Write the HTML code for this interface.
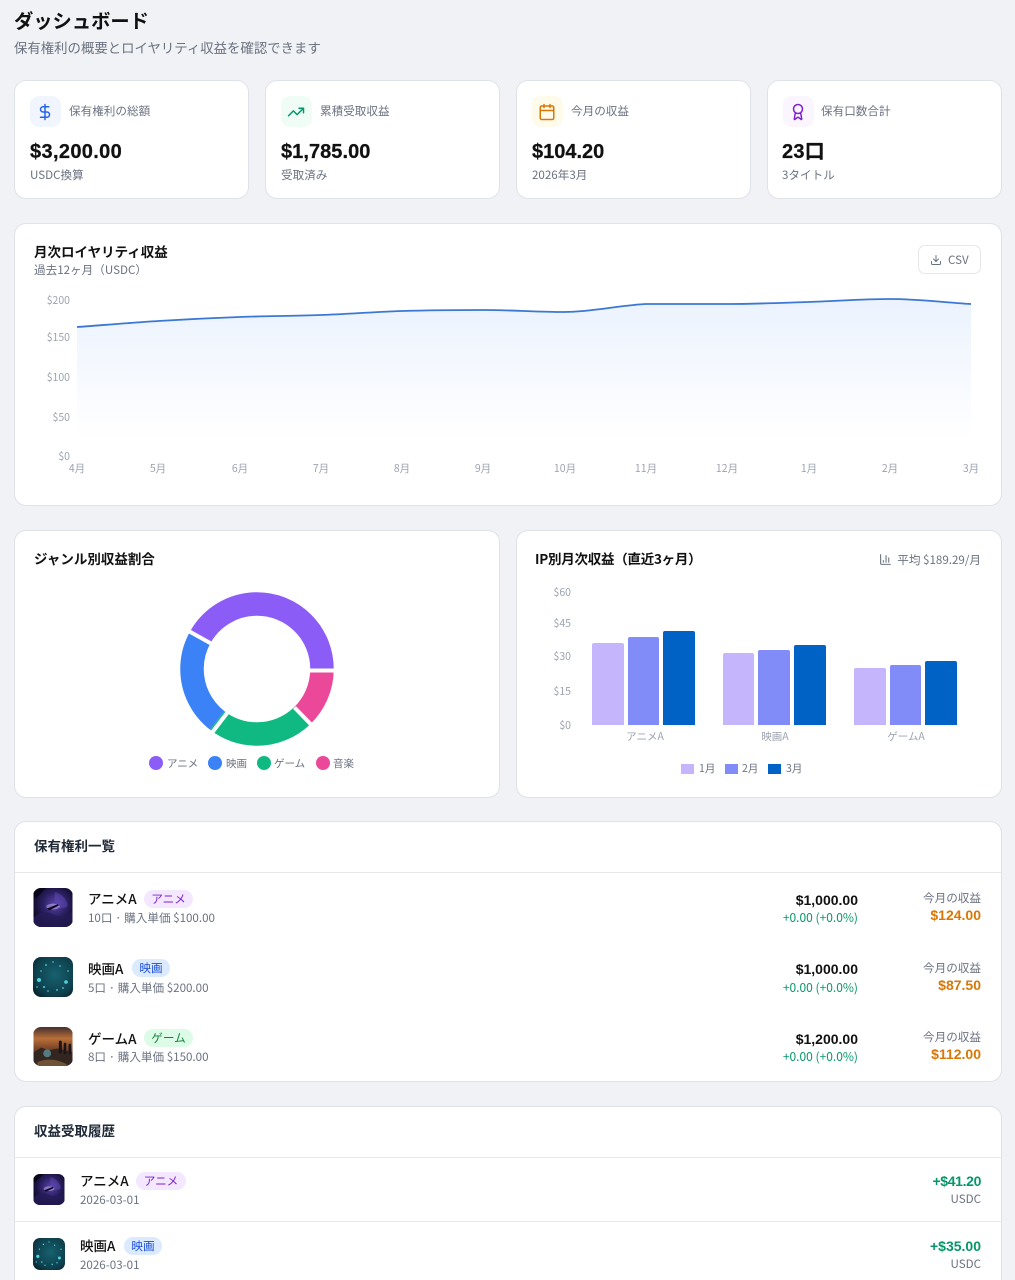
<!DOCTYPE html>
<html lang="ja"><head><meta charset="utf-8"><title>ダッシュボード</title>
<style>
html,body{margin:0;padding:0;background:#f0f2f5;height:1280px;overflow:hidden}
body{position:relative;width:1015px;font-family:"Noto Sans CJK JP","Liberation Sans",sans-serif;color:#111}
.c{position:absolute;background:#fff;border:1px solid #dfe2e8;border-radius:12px;box-sizing:border-box}
.t{position:absolute;white-space:nowrap;line-height:1}
.b{font-weight:700}
.n{font-family:"Liberation Sans","Noto Sans CJK JP",sans-serif;font-weight:700;letter-spacing:.2px}
.g{color:#6b7280}
.a{color:#9ca3af;font-size:10.5px}
.ib{position:absolute;width:31px;height:31px;border-radius:9px;top:96px}
.ib svg{position:absolute;left:6px;top:7px}
svg.i{fill:none;stroke-width:2;stroke-linecap:round;stroke-linejoin:round}
.p{position:absolute;height:18px;line-height:18px;border-radius:9px;font-size:11.6px;text-align:center}
.ani{background:#f3e8ff;color:#7e22ce}.mov{background:#dbeafe;color:#1d4ed8}.gam{background:#dcfce7;color:#15803d}
.d{position:absolute;height:1px;background:#e5e7eb}
.th{position:absolute;overflow:hidden}
.th svg{display:block;width:100%;height:100%}
.dot{position:absolute;width:14px;height:14px;border-radius:50%;top:756px}
.sq{position:absolute;width:13px;height:10px;top:764px}
</style></head><body>
<svg width="0" height="0" style="position:absolute">
<defs>
<radialGradient id="ga" cx=".55" cy=".42" r=".62"><stop offset="0" stop-color="#5b44ad"/><stop offset=".5" stop-color="#2c2063"/><stop offset="1" stop-color="#0a0820"/></radialGradient>
<radialGradient id="gm" cx=".55" cy=".45" r=".72"><stop offset="0" stop-color="#17616f"/><stop offset=".7" stop-color="#0e3f4c"/><stop offset="1" stop-color="#061d27"/></radialGradient>
<linearGradient id="gg" x1="0" y1="0" x2="0" y2="1"><stop offset="0" stop-color="#46302e"/><stop offset=".3" stop-color="#b96f38"/><stop offset=".55" stop-color="#7a4529"/><stop offset="1" stop-color="#1b1619"/></linearGradient>
<linearGradient id="lf" x1="0" y1="0" x2="0" y2="1"><stop offset="0" stop-color="#3b82f6" stop-opacity=".1"/><stop offset="1" stop-color="#3b82f6" stop-opacity="0"/></linearGradient>
<symbol id="ta" viewBox="0 0 40 40"><rect width="40" height="40" fill="url(#ga)"/><path d="M0 30Q10 22 20 27T40 24V40H0Z" fill="#261b58" opacity=".8"/><path d="M22 4q8 2 12 10t-8 6q-6-6-4-16Z" fill="#6b55c8" opacity=".4"/><ellipse cx="20" cy="19" rx="7" ry="3" fill="#c7b8f0" opacity=".5"/><path d="M14 21l11-4.500 1 1.500-10 5Z" fill="#0b0820"/><path d="M5 0h8L3 10H0V4Z" fill="#050414" opacity=".8"/></symbol>
<symbol id="tm" viewBox="0 0 40 40"><rect width="40" height="40" fill="url(#gm)"/><g fill="#4fd6e6"><circle cx="6" cy="23" r="2"/><circle cx="33" cy="25" r="1.800"/><circle cx="13" cy="8" r=".9"/><circle cx="20" cy="5" r=".8"/><circle cx="27" cy="9" r=".8"/><circle cx="8" cy="14" r=".8"/><circle cx="35" cy="14" r=".8"/><circle cx="11" cy="30" r="1"/><circle cx="15" cy="34" r=".8"/><circle cx="24" cy="33" r=".9"/><circle cx="30" cy="31" r=".9"/><circle cx="4" cy="30" r=".8"/></g></symbol>
<symbol id="tg" viewBox="0 0 40 40"><rect width="40" height="40" fill="url(#gg)"/><path d="M0 26l8-5 7 3 10-2 15 4V40H0Z" fill="#33251f"/><g fill="#1a1416"><rect x="26" y="14" width="3" height="13" rx="1.400"/><rect x="31" y="16" width="2.600" height="12" rx="1.300"/><rect x="36" y="17" width="2.400" height="11" rx="1.200"/></g><circle cx="14" cy="27" r="4" fill="#5d8f98" opacity=".8"/><path d="M4 36q14-6 30 2v2H4Z" fill="#a8804e" opacity=".5"/></symbol>
</defs>
</svg>

<div class="t b" style="left:14px;top:11px;font-size:19.3px">ダッシュボード</div>
<div class="t g" style="left:14px;top:41px;font-size:13.4px">保有権利の概要とロイヤリティ収益を確認できます</div>

<div class="c" style="left:14px;top:80px;width:235px;height:119px"></div>
<div class="c" style="left:265px;top:80px;width:235px;height:119px"></div>
<div class="c" style="left:516px;top:80px;width:235px;height:119px"></div>
<div class="c" style="left:767px;top:80px;width:235px;height:119px"></div>

<div class="ib" style="left:30px;background:#f1f6fe"><svg class="i" width="18" height="18" viewBox="0 0 24 24" stroke="#2563eb"><path d="M12 2v20"/><path d="M17 5H9.500a3.500 3.500 0 0 0 0 7h5a3.500 3.500 0 0 1 0 7H6"/></svg></div>
<div class="ib" style="left:281px;background:#f0fdf6"><svg class="i" width="18" height="18" viewBox="0 0 24 24" stroke="#059669"><path d="M22 7 13.500 15.500 8.500 10.500 2 17"/><path d="M16 7h6v6"/></svg></div>
<div class="ib" style="left:532px;background:#fffbeb"><svg class="i" width="18" height="18" viewBox="0 0 24 24" stroke="#d97706"><path d="M8 2v4M16 2v4"/><rect x="3" y="4" width="18" height="18" rx="2"/><path d="M3 10h18"/></svg></div>
<div class="ib" style="left:783px;background:#fbf5ff"><svg class="i" width="18" height="18" viewBox="0 0 24 24" stroke="#7e22ce"><path d="m15.477 12.890 1.515 8.526a.5.5 0 0 1-.81.470l-3.580-2.687a1 1 0 0 0-1.197 0l-3.586 2.686a.5.5 0 0 1-.81-.469l1.514-8.526"/><circle cx="12" cy="8" r="6"/></svg></div>

<div class="t g" style="left:69px;top:106px;font-size:11.6px">保有権利の総額</div>
<div class="t g" style="left:320px;top:106px;font-size:11.6px">累積受取収益</div>
<div class="t g" style="left:571px;top:106px;font-size:11.6px">今月の収益</div>
<div class="t g" style="left:821px;top:106px;font-size:11.6px">保有口数合計</div>

<div class="t n" style="left:30px;top:142px;font-size:20px;letter-spacing:.35px;-webkit-text-stroke:.25px #111">$3,200.00</div>
<div class="t n" style="left:281px;top:142px;font-size:20px;letter-spacing:.05px;-webkit-text-stroke:.25px #111">$1,785.00</div>
<div class="t n" style="left:532px;top:142px;font-size:20px;letter-spacing:0;-webkit-text-stroke:.25px #111">$104.20</div>
<div class="t n" style="left:782px;top:142px;font-size:20px;-webkit-text-stroke:.25px #111">23口</div>

<div class="t g" style="left:30px;top:170px;font-size:11.6px">USDC換算</div>
<div class="t g" style="left:281px;top:170px;font-size:11.6px">受取済み</div>
<div class="t g" style="left:532px;top:170px;font-size:11.6px">2026年3月</div>
<div class="t g" style="left:782px;top:170px;font-size:11.6px">3タイトル</div>

<div class="c" style="left:14px;top:223px;width:988px;height:283px"></div>
<div class="t b" style="left:34px;top:245px;font-size:13.5px">月次ロイヤリティ収益</div>
<div class="t g" style="left:34px;top:265px;font-size:11.6px">過去12ヶ月（USDC）</div>
<div style="position:absolute;left:918px;top:245px;width:63px;height:29px;border:1px solid #e5e7eb;border-radius:7px;box-sizing:border-box"></div>
<svg class="i" style="position:absolute;left:930px;top:254px" width="12" height="12" viewBox="0 0 24 24" stroke="#6b7280"><path d="M21 15v4a2 2 0 0 1-2 2H5a2 2 0 0 1-2-2v-4"/><path d="M7 10l5 5 5-5"/><path d="M12 15V3"/></svg>
<div class="t g" style="left:948px;top:255px;font-size:11.6px">CSV</div>

<svg style="position:absolute;left:0;top:0" width="1015" height="520">
<path d="M77 327C104.100 325 131.200 322.670 158.300 321C185.400 319.330 212.400 318 239.500 317C266.600 316 293.700 316 320.800 315C347.900 314 374.900 311.830 402 311C429.100 310.170 456.300 310 483.400 310C510.500 310 537.500 312 564.600 312C591.700 312 618.800 305.330 645.900 304C673 304 700.100 304 727.200 304C754.300 304 781.300 302.830 808.400 302C835.500 301.170 862.600 299 889.700 299C916.800 299 943.900 302.330 971 304V440H77Z" fill="url(#lf)"/>
<path d="M77 327C104.100 325 131.200 322.670 158.300 321C185.400 319.330 212.400 318 239.500 317C266.600 316 293.700 316 320.800 315C347.900 314 374.900 311.830 402 311C429.100 310.170 456.300 310 483.400 310C510.500 310 537.500 312 564.600 312C591.700 312 618.800 305.330 645.900 304C673 304 700.100 304 727.200 304C754.300 304 781.300 302.830 808.400 302C835.500 301.170 862.600 299 889.700 299C916.800 299 943.900 302.330 971 304" fill="none" stroke="#3b78d4" stroke-width="1.800"/>
</svg>
<div class="t a" style="right:945px;top:296px">$200</div>
<div class="t a" style="right:945px;top:333px">$150</div>
<div class="t a" style="right:945px;top:373px">$100</div>
<div class="t a" style="right:945px;top:413px">$50</div>
<div class="t a" style="right:945px;top:452px">$0</div>
<div class="t a" style="left:47px;width:60px;text-align:center;top:464px">4月</div>
<div class="t a" style="left:128px;width:60px;text-align:center;top:464px">5月</div>
<div class="t a" style="left:210px;width:60px;text-align:center;top:464px">6月</div>
<div class="t a" style="left:291px;width:60px;text-align:center;top:464px">7月</div>
<div class="t a" style="left:372px;width:60px;text-align:center;top:464px">8月</div>
<div class="t a" style="left:453px;width:60px;text-align:center;top:464px">9月</div>
<div class="t a" style="left:535px;width:60px;text-align:center;top:464px">10月</div>
<div class="t a" style="left:616px;width:60px;text-align:center;top:464px">11月</div>
<div class="t a" style="left:697px;width:60px;text-align:center;top:464px">12月</div>
<div class="t a" style="left:779px;width:60px;text-align:center;top:464px">1月</div>
<div class="t a" style="left:860px;width:60px;text-align:center;top:464px">2月</div>
<div class="t a" style="left:941px;width:60px;text-align:center;top:464px">3月</div>

<div class="c" style="left:14px;top:530px;width:486px;height:268px"></div>
<div class="t b" style="left:34px;top:552px;font-size:13.5px">ジャンル別収益割合</div>
<svg style="position:absolute;left:169.500px;top:582px" width="174" height="174" viewBox="-87 -87 174 174">
<g transform="scale(1 -1)" fill="none" stroke-width="23.500">
<circle r="65" stroke="#8b5cf6" pathLength="360" stroke-dasharray="151 209" stroke-dashoffset="0"/>
<circle r="65" stroke="#3b82f6" pathLength="360" stroke-dasharray="81.500 278.500" stroke-dashoffset="-151"/>
<circle r="65" stroke="#10b981" pathLength="360" stroke-dasharray="82 278" stroke-dashoffset="-232.500"/>
<circle r="65" stroke="#ec4899" pathLength="360" stroke-dasharray="45.500 314.500" stroke-dashoffset="-314.500"/>
</g>
<g stroke="#fff" stroke-width="4">
<path d="M50 1.500H80"/>
<path d="M-44.600 -24.700L-72 -40"/>
<path d="M-29.500 43.500L-46 65"/>
<path d="M37.500 38.500L56 57.500"/>
</g>
</svg>
<div class="dot" style="left:149px;background:#8b5cf6"></div><div class="t g" style="left:167px;top:759px;font-size:10.5px">アニメ</div>
<div class="dot" style="left:208px;background:#3b82f6"></div><div class="t g" style="left:226px;top:759px;font-size:10.5px">映画</div>
<div class="dot" style="left:257px;background:#10b981"></div><div class="t g" style="left:274px;top:759px;font-size:10.5px">ゲーム</div>
<div class="dot" style="left:316px;background:#ec4899"></div><div class="t g" style="left:333px;top:759px;font-size:10.5px">音楽</div>

<div class="c" style="left:516px;top:530px;width:486px;height:268px"></div>
<div class="t b" style="left:535px;top:552px;font-size:13.5px;letter-spacing:-.25px">IP別月次収益（直近3ヶ月）</div>
<svg class="i" style="position:absolute;left:879px;top:553px" width="13" height="13" viewBox="0 0 24 24" stroke="#6b7280"><path d="M3 3v16a2 2 0 0 0 2 2h16"/><path d="M18 17V9M13 17V5M8 17v-3"/></svg>
<div class="t g" style="right:34px;top:555px;font-size:11.6px">平均 $189.29/月</div>
<div class="t a" style="right:444px;top:588px">$60</div>
<div class="t a" style="right:444px;top:619px">$45</div>
<div class="t a" style="right:444px;top:652px">$30</div>
<div class="t a" style="right:444px;top:687px">$15</div>
<div class="t a" style="right:444px;top:721px">$0</div>
<svg style="position:absolute;left:0;top:600px" width="1015" height="130" viewBox="0 600 1015 130">
<path d="M592 725V645a2 2 0 0 1 2-2H622a2 2 0 0 1 2 2V725Z" fill="#c4b5fd"/>
<path d="M628 725V639a2 2 0 0 1 2-2H657a2 2 0 0 1 2 2V725Z" fill="#818cf8"/>
<path d="M663 725V633a2 2 0 0 1 2-2H693a2 2 0 0 1 2 2V725Z" fill="#0062c4"/>
<path d="M723 725V655a2 2 0 0 1 2-2H752a2 2 0 0 1 2 2V725Z" fill="#c4b5fd"/>
<path d="M758 725V652a2 2 0 0 1 2-2H788a2 2 0 0 1 2 2V725Z" fill="#818cf8"/>
<path d="M794 725V647a2 2 0 0 1 2-2H824a2 2 0 0 1 2 2V725Z" fill="#0062c4"/>
<path d="M854 725V670a2 2 0 0 1 2-2H884a2 2 0 0 1 2 2V725Z" fill="#c4b5fd"/>
<path d="M890 725V667a2 2 0 0 1 2-2H919a2 2 0 0 1 2 2V725Z" fill="#818cf8"/>
<path d="M925 725V663a2 2 0 0 1 2-2H955a2 2 0 0 1 2 2V725Z" fill="#0062c4"/>
</svg>
<div class="t a" style="left:595px;width:100px;text-align:center;top:732px">アニメA</div>
<div class="t a" style="left:725px;width:100px;text-align:center;top:732px">映画A</div>
<div class="t a" style="left:856px;width:100px;text-align:center;top:732px">ゲームA</div>
<div class="sq" style="left:681px;background:#c4b5fd"></div><div class="t g" style="left:699px;top:764px;font-size:10.5px">1月</div>
<div class="sq" style="left:725px;background:#818cf8"></div><div class="t g" style="left:742px;top:764px;font-size:10.5px">2月</div>
<div class="sq" style="left:768px;background:#0062c4"></div><div class="t g" style="left:786px;top:764px;font-size:10.5px">3月</div>

<div class="c" style="left:14px;top:821px;width:988px;height:261px"></div>
<div class="t b" style="left:34px;top:839px;font-size:13.5px;color:#1f2937">保有権利一覧</div>
<div class="d" style="left:15px;top:872px;width:986px"></div>

<div class="th" style="left:33px;top:888px;width:40px;height:39px;border-radius:8px"><svg><use href="#ta"/></svg></div>
<div class="t" style="left:88px;top:892px;font-size:13.5px;font-weight:500">アニメA</div>
<div class="p ani" style="left:144px;top:890px;width:49px">アニメ</div>
<div class="t g" style="left:88px;top:913px;font-size:11.6px">10口 · 購入単価 $100.00</div>
<div class="t n" style="right:157px;top:893px;font-size:14px;letter-spacing:0">$1,000.00</div>
<div class="t" style="right:157px;top:912px;font-size:12px;color:#059669">+0.00 (+0.0%)</div>
<div class="t g" style="right:34px;top:893px;font-size:11.6px">今月の収益</div>
<div class="t n" style="right:34px;top:908px;font-size:14px;letter-spacing:0;color:#d97706">$124.00</div>

<div class="th" style="left:33px;top:957px;width:40px;height:40px;border-radius:8px"><svg><use href="#tm"/></svg></div>
<div class="t" style="left:88px;top:962px;font-size:13.5px;font-weight:500">映画A</div>
<div class="p mov" style="left:132px;top:959px;width:38px">映画</div>
<div class="t g" style="left:88px;top:983px;font-size:11.6px">5口 · 購入単価 $200.00</div>
<div class="t n" style="right:157px;top:962px;font-size:14px;letter-spacing:0">$1,000.00</div>
<div class="t" style="right:157px;top:982px;font-size:12px;color:#059669">+0.00 (+0.0%)</div>
<div class="t g" style="right:34px;top:963px;font-size:11.6px">今月の収益</div>
<div class="t n" style="right:34px;top:978px;font-size:14px;letter-spacing:0;color:#d97706">$87.50</div>

<div class="th" style="left:33px;top:1027px;width:40px;height:39px;border-radius:8px"><svg><use href="#tg"/></svg></div>
<div class="t" style="left:88px;top:1032px;font-size:13.5px;font-weight:500">ゲームA</div>
<div class="p gam" style="left:144px;top:1029px;width:49px">ゲーム</div>
<div class="t g" style="left:88px;top:1052px;font-size:11.6px">8口 · 購入単価 $150.00</div>
<div class="t n" style="right:157px;top:1032px;font-size:14px;letter-spacing:0">$1,200.00</div>
<div class="t" style="right:157px;top:1051px;font-size:12px;color:#059669">+0.00 (+0.0%)</div>
<div class="t g" style="right:34px;top:1032px;font-size:11.6px">今月の収益</div>
<div class="t n" style="right:34px;top:1047px;font-size:14px;letter-spacing:0;color:#d97706">$112.00</div>

<div class="c" style="left:14px;top:1106px;width:988px;height:174px;border-bottom:0;border-radius:12px 12px 0 0"></div>
<div class="t b" style="left:34px;top:1124px;font-size:13.5px;color:#1f2937">収益受取履歴</div>
<div class="d" style="left:15px;top:1157px;width:986px"></div>
<div class="d" style="left:15px;top:1221px;width:986px"></div>

<div class="th" style="left:33px;top:1174px;width:32px;height:31px;border-radius:7px"><svg><use href="#ta"/></svg></div>
<div class="t" style="left:80px;top:1174px;font-size:13.5px;font-weight:500">アニメA</div>
<div class="p ani" style="left:136px;top:1172px;width:50px">アニメ</div>
<div class="t g" style="left:80px;top:1195px;font-size:11.6px">2026-03-01</div>
<div class="t n" style="right:34px;top:1174px;font-size:14px;letter-spacing:-.35px;color:#059669">+$41.20</div>
<div class="t g" style="right:34px;top:1194px;font-size:11.6px">USDC</div>

<div class="th" style="left:33px;top:1238px;width:32px;height:32px;border-radius:7px"><svg><use href="#tm"/></svg></div>
<div class="t" style="left:80px;top:1239px;font-size:13.5px;font-weight:500">映画A</div>
<div class="p mov" style="left:124px;top:1237px;width:38px">映画</div>
<div class="t g" style="left:80px;top:1260px;font-size:11.6px">2026-03-01</div>
<div class="t n" style="right:34px;top:1239px;font-size:14px;letter-spacing:0;color:#059669">+$35.00</div>
<div class="t g" style="right:34px;top:1259px;font-size:11.6px">USDC</div>
</body></html>
